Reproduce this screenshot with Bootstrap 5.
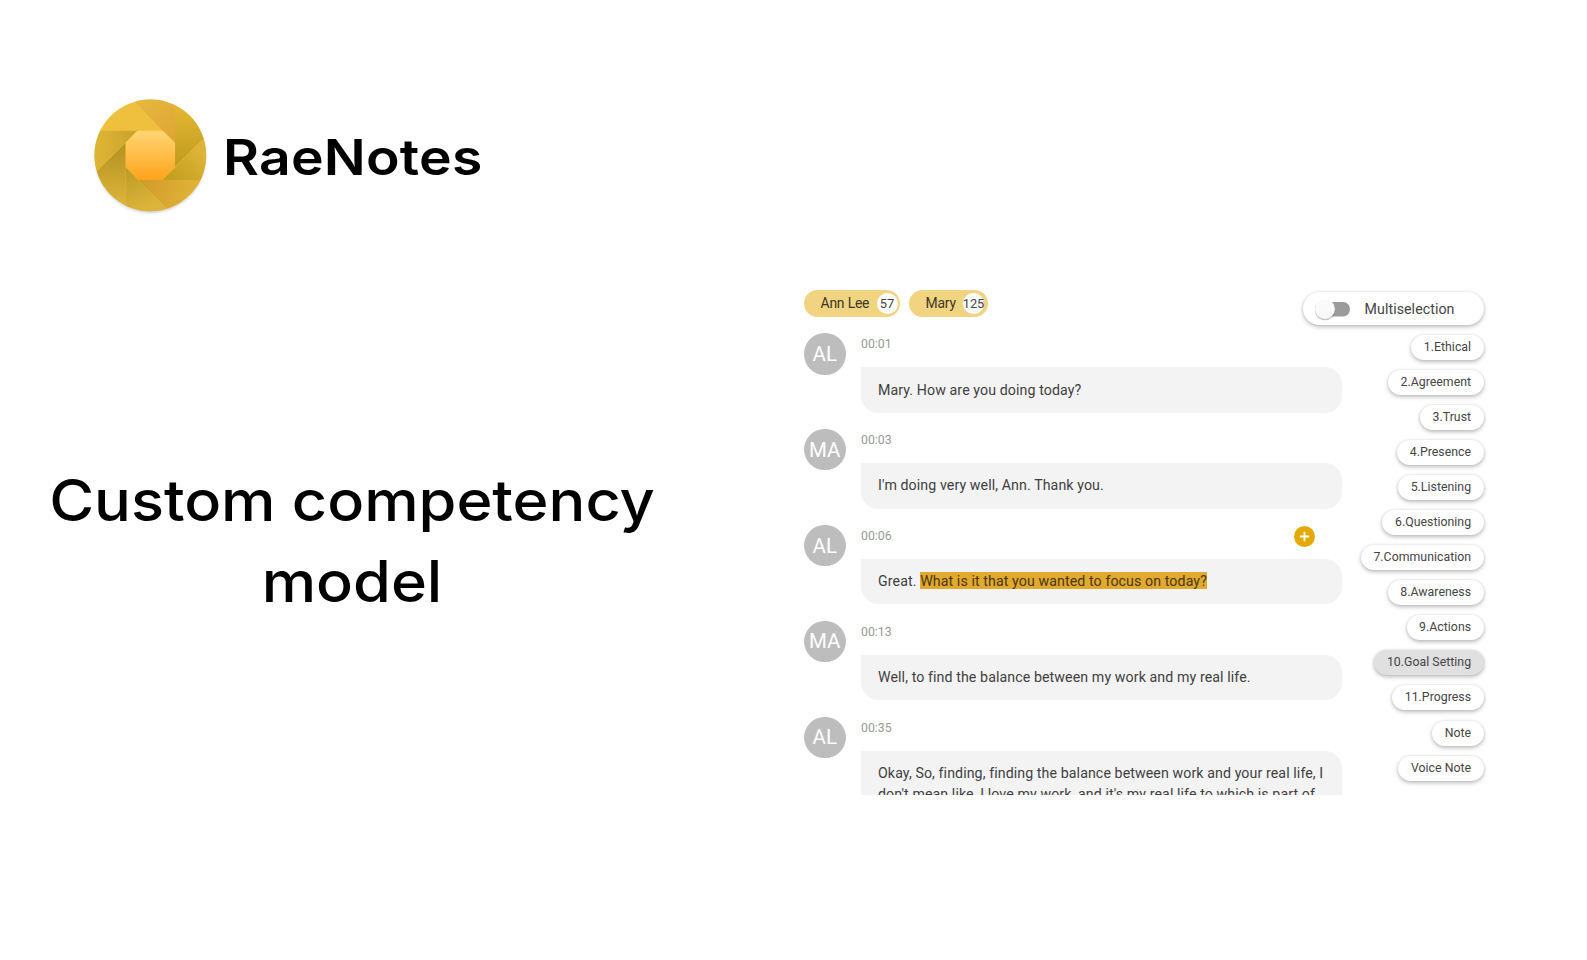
<!DOCTYPE html>
<html lang="en">
<head>
    <meta charset="UTF-8">
    <title>RaeNotes</title>
    <link href="https://cdn.jsdelivr.net/npm/bootstrap@5.3.3/dist/css/bootstrap.min.css" rel="stylesheet">
    <style>
        body { height: 960px; overflow: hidden; background: #fff; font-family: Roboto, "Liberation Sans", sans-serif; }
        .page-grid { height: 960px; grid-template-columns: 804px 688px; }
        .intro { padding: 95px 0 0 38px; font-family: Inter, "Open Sans", sans-serif; color: #000; }
        .brand { margin-left: 52px; height: 125px; }
        .brand svg { width: 120px; height: 125px; flex: none; }
        .brand-name { font-size: 50px; font-weight: 600; margin-left: 12.5px; line-height: 124px; height: 125px; transform: scaleX(1.105); transform-origin: left; letter-spacing: .2px; }
        .headline { width: 628px; margin-top: 240px; font-size: 57.4px; line-height: 81.2px; font-weight: 500; white-space: nowrap; transform: scaleX(1.067); }

        .app { height: 505px; margin-top: 290px; overflow: hidden; font-size: 14.2px; }
        .transcript { width: 538px; flex: none; }
        .speakers { gap: 9px; }
        .speaker { height: 27px; border-radius: 14px; background: #f1d481; padding: 0 2.5px 0 16.5px; color: #3c3827; font-size: 13.9px; letter-spacing: -.18px; }
        .speaker-count { width: 21px; height: 21px; border-radius: 50%; background: #fff; font-size: 12.9px; color: #444; letter-spacing: -.1px; }
        .speaker-wide { padding-right: 4px; }
        .entry { height: 95.9px; }
        .avatar { width: 41.5px; height: 41.5px; border-radius: 50%; background: #bdbdbd; color: #fff; font-size: 20.5px; line-height: 32px; flex: none; }
        .entry-main { width: 480.5px; margin-left: 15.5px; }
        .entry-time { height: 34px; line-height: 23.3px; font-size: 12.3px; color: #999; padding-right: 27px; }
        .bubble { min-height: 45.6px; padding: 12.5px 17px; background: #f3f3f3; border-radius: 0 17px 17px 17px; line-height: 20.7px; color: #3f3f3f; letter-spacing: .09px; white-space: nowrap; }
        .picked { background: #e2a92f; color: #4a3710; padding: 1px 0 0; }
        .add-btn { width: 21px; height: 21px; margin-top: 1px; }

        .tags { padding-top: 2px; width: 142px; flex: none; padding-right: 8.4px; }
        .pill { border-radius: 17px; background: #fff; box-shadow: 0 2px 4px rgba(0,0,0,.25), 0 0 3px rgba(0,0,0,.1); color: #444; flex: none; }
        .multi { width: 181px; height: 33px; padding-left: 12.5px; letter-spacing: .06px; font-size: 14.2px; line-height: 34px; margin-bottom: 10px; white-space: nowrap; }
        .multi svg { width: 36px; height: 26px; margin-right: 13.5px; flex: none; }
        .tag { height: 25px; padding: 0 12.5px; font-size: 12.3px; line-height: 24px; margin-bottom: 10.06px; letter-spacing: .03px; white-space: nowrap; }
        .tag-on { background: #e0e0e0; }
    </style>
</head>
<body>
    <div class="page-grid d-grid">
        <section class="intro">
            <div class="brand d-flex align-items-center">
                <svg viewBox="30 30 360 375">
                    <defs>
                        <clipPath id="disc"><circle cx="211" cy="211" r="167.5"/></clipPath>
                        <linearGradient id="core" x1="0" y1="0" x2="0" y2="1"><stop stop-color="#ffd673"/><stop offset="1" stop-color="#ffa31c"/></linearGradient>
                        <linearGradient id="right" x1="0" y1="0" x2="0" y2="1"><stop stop-color="#eabc36"/><stop offset="1" stop-color="#c09b20"/></linearGradient>
                        <linearGradient id="top" x1="0" y1="0" x2="1" y2="1"><stop stop-color="#e8bb3f"/><stop offset="1" stop-color="#dfa536"/></linearGradient>
                        <linearGradient id="left" gradientUnits="userSpaceOnUse" x1="120" y1="190" x2="120" y2="350"><stop stop-color="#b69423"/><stop offset="1" stop-color="#dab237"/></linearGradient>
                        <linearGradient id="leftTop" x1="0" y1="0" x2="1" y2="0"><stop stop-color="#e2b737"/><stop offset="1" stop-color="#c8a329"/></linearGradient>
                        <linearGradient id="bottom" gradientUnits="userSpaceOnUse" x1="140" y1="250" x2="200" y2="370"><stop stop-color="#bd9b27"/><stop offset="1" stop-color="#dcb439"/></linearGradient>
                        <linearGradient id="bottomRight" gradientUnits="userSpaceOnUse" x1="190" y1="290" x2="320" y2="330"><stop stop-color="#d19c2a"/><stop offset="1" stop-color="#deb036"/></linearGradient>
                        <linearGradient id="rightLow" gradientUnits="userSpaceOnUse" x1="275" y1="275" x2="355" y2="190"><stop stop-color="#c5a021"/><stop offset="1" stop-color="#ddb437"/></linearGradient>
                        <filter id="soft"><feGaussianBlur stdDeviation="5"/></filter>
                    </defs>
                    <circle cx="211" cy="218" r="165" fill="#000" opacity=".2" filter="url(#soft)"/>
                    <g clip-path="url(#disc)">
                        <path fill="#eec03e" d="M30 30H390V390H30z"/>
                        <path fill="url(#top)" d="M145 30H285V173L248 137z"/>
                        <path fill="url(#right)" d="M285 30H390V142L285 245z"/>
                        <path fill="url(#rightLow)" d="M390 142V285H247z"/>
                        <path fill="url(#bottomRight)" d="M390 285V390H280L175 285z"/>
                        <path fill="url(#bottom)" d="M137 245L175 285L280 390H137z"/>
                        <path fill="url(#left)" d="M137 173V390H30V278z"/>
                        <path fill="url(#leftTop)" d="M30 137H172L30 279z"/>
                    </g>
                    <path fill="url(#core)" d="M172 137H248L285 173V245L247 285H175L137 245V173z"/>
                </svg>
                <div class="brand-name">RaeNotes</div>
            </div>
            <h1 class="headline text-center mb-0">Custom competency<br>model</h1>
        </section>

        <main class="app d-flex justify-content-between">
            <div class="transcript">
                <div class="speakers d-flex mb-3">
                    <div class="speaker d-flex align-items-center" style="width:96px">Ann Lee<span class="speaker-count d-flex align-items-center justify-content-center ms-auto">57</span></div>
                    <div class="speaker speaker-wide d-flex align-items-center" style="width:79px">Mary<span class="speaker-count d-flex align-items-center justify-content-center ms-auto">125</span></div>
                </div>
                <div class="entry d-flex">
                    <div class="avatar d-flex align-items-center justify-content-center">AL</div>
                    <div class="entry-main"><div class="entry-time">00:01</div><div class="bubble">Mary. How are you doing today?</div></div>
                </div>
                <div class="entry d-flex">
                    <div class="avatar d-flex align-items-center justify-content-center">MA</div>
                    <div class="entry-main"><div class="entry-time">00:03</div><div class="bubble">I'm doing very well, Ann. Thank you.</div></div>
                </div>
                <div class="entry d-flex">
                    <div class="avatar d-flex align-items-center justify-content-center">AL</div>
                    <div class="entry-main">
                        <div class="entry-time d-flex justify-content-between">00:06
                            <svg class="add-btn" viewBox="0 0 21 21"><circle cx="10.5" cy="10.5" r="10.5" fill="#e3aa05"/><path d="M10.5 5.8v9.4M5.8 10.5h9.4" stroke="#fff" stroke-width="1.8"/></svg>
                        </div>
                        <div class="bubble">Great. <mark class="picked">What is it that you wanted to focus on today?</mark></div>
                    </div>
                </div>
                <div class="entry d-flex">
                    <div class="avatar d-flex align-items-center justify-content-center">MA</div>
                    <div class="entry-main"><div class="entry-time">00:13</div><div class="bubble">Well, to find the balance between my work and my real life.</div></div>
                </div>
                <div class="entry d-flex">
                    <div class="avatar d-flex align-items-center justify-content-center">AL</div>
                    <div class="entry-main"><div class="entry-time">00:35</div><div class="bubble">Okay, So, finding, finding the balance between work and your real life, I<br>don't mean like, I love my work, and it's my real life to which is part of</div></div>
                </div>
            </div>
            <div class="tags d-flex flex-column align-items-end">
                <div class="pill multi d-flex align-items-center">
                    <svg viewBox="0 0 36 26"><rect x="6" y="6" width="29" height="14.5" rx="7" fill="#9b9b9b"/><circle cx="10" cy="14" r="10.3" fill="#000" opacity=".22"/><circle cx="10" cy="13" r="10" fill="#fafafa"/></svg>
                    Multiselection
                </div>
                <div class="pill tag">1.Ethical</div>
                <div class="pill tag">2.Agreement</div>
                <div class="pill tag">3.Trust</div>
                <div class="pill tag">4.Presence</div>
                <div class="pill tag">5.Listening</div>
                <div class="pill tag">6.Questioning</div>
                <div class="pill tag">7.Communication</div>
                <div class="pill tag">8.Awareness</div>
                <div class="pill tag">9.Actions</div>
                <div class="pill tag tag-on">10.Goal Setting</div>
                <div class="pill tag">11.Progress</div>
                <div class="pill tag">Note</div>
                <div class="pill tag">Voice Note</div>
            </div>
        </main>
    </div>
    <script src="https://cdn.jsdelivr.net/npm/bootstrap@5.3.3/dist/js/bootstrap.bundle.min.js"></script>
</body>
</html>
